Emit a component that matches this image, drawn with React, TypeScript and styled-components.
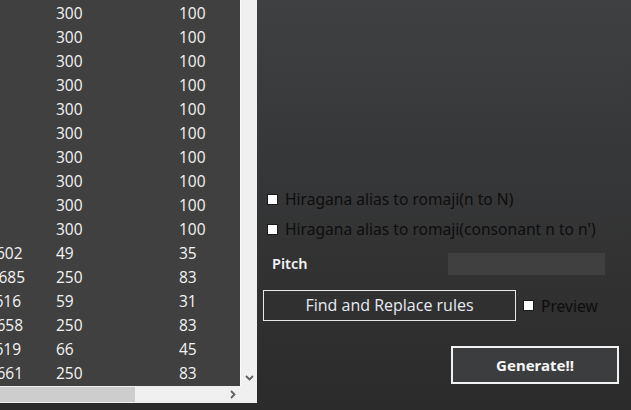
import React from "react";
import styled, { createGlobalStyle } from "styled-components";

const Global = createGlobalStyle`
  html, body { margin: 0; padding: 0; }
  body {
    width: 631px;
    height: 410px;
    overflow: hidden;
    background: #2c2c2c;
  }
`;

const Screen = styled.div`
  width: 631px;
  height: 410px;
  display: flex;
  align-items: flex-start;
  background: linear-gradient(180deg, #3f4042 0%, #37383a 35%, #313131 70%, #2b2b2b 100%);
  font-family: "Open Sans", "Noto Sans", sans-serif;
  overflow: hidden;
`;

const GridPane = styled.div`
  width: 257px;
  height: 403px;
  display: grid;
  grid-template-columns: 240px 17px;
  grid-template-rows: 386px 17px;
  background: #f0f0f0;
`;

const Rows = styled.div`
  background: #404040;
  overflow: hidden;
  padding-top: 1px;
`;

const Row = styled.div`
  height: 24px;
  display: grid;
  grid-template-columns: 56px 123px 61px;
  align-items: center;
  color: #f4f4f4;
  font-size: 15.5px;
  line-height: 24px;
  white-space: nowrap;
`;

const Cell = styled.div<{ $shift?: number }>`
  overflow: hidden;
  text-indent: ${(p) => p.$shift ?? 0}px;
`;

const VScroll = styled.div`
  background: #f0f0f0;
  border-left: 1px solid #fafafa;
  display: flex;
  align-items: flex-end;
  justify-content: center;
  padding-bottom: 5px;
  box-sizing: border-box;
`;

const HScroll = styled.div`
  background: #f0f0f0;
  display: flex;
  align-items: center;
  padding: 1px 0 2px;
  box-sizing: border-box;
`;

const Thumb = styled.div`
  width: 135px;
  height: 15px;
  background: #cdcdcd;
`;

const HArrow = styled.div`
  margin-left: auto;
  margin-right: 4px;
  display: flex;
  align-items: center;
`;

const Corner = styled.div`
  background: #f0f0f0;
`;

const Panel = styled.div`
  flex: 1;
  height: 410px;
  display: flex;
  flex-direction: column;
  padding: 0 0 0 6px;
  box-sizing: border-box;
`;

const CheckRow = styled.label<{ $top: number }>`
  display: flex;
  align-items: center;
  gap: 7px;
  margin-top: ${(p) => p.$top}px;
  margin-left: 4px;
  height: 20px;
  font-family: "Noto Sans", "Open Sans", sans-serif;
  font-size: 15.6px;
  color: #0d0d0d;
  white-space: nowrap;
`;

const Box = styled.span`
  width: 11px;
  height: 11px;
  box-sizing: border-box;
  background: #ffffff;
  border: 1px solid #1a1a1a;
  flex: none;
`;

const PitchRow = styled.div`
  display: flex;
  align-items: center;
  height: 22px;
  margin-top: 14px;
`;

const PitchLabel = styled.span`
  margin-left: 9px;
  width: 176px;
  color: #f2f2f2;
  font-family: "Noto Sans", sans-serif;
  font-weight: 600;
  font-size: 14.5px;
  line-height: 20px;
  padding-bottom: 2px;
`;

const PitchInput = styled.div`
  width: 157px;
  height: 22px;
  background: #404040;
`;

const FindRow = styled.div`
  display: flex;
  align-items: center;
  margin-top: 15px;
`;

const OutlineButton = styled.button`
  width: 253px;
  height: 31px;
  box-sizing: border-box;
  background: transparent;
  border: 1px solid #e8e8e8;
  color: #e6ebf3;
  font-family: "Open Sans", sans-serif;
  font-size: 16px;
  padding: 0 0 1px;
  margin: 0;
`;

const PreviewCheck = styled.label`
  display: flex;
  align-items: center;
  gap: 7px;
  margin-left: 7px;
  font-family: "Noto Sans", sans-serif;
  font-size: 15.6px;
  color: #0d0d0d;
`;

const GenerateWrap = styled.div`
  display: flex;
  justify-content: flex-end;
  margin-top: 25px;
  padding-right: 12px;
`;

const GenerateButton = styled.button`
  width: 168px;
  height: 38px;
  box-sizing: border-box;
  background: #3c3d3f;
  border: 2px solid #f2f2f2;
  color: #f6f6f6;
  font-family: "Noto Sans", sans-serif;
  font-weight: 700;
  font-size: 15px;
  padding: 0;
  margin: 0;
`;

type R = { a: string; shift: number; b: string; c: string };

const rows: R[] = [
  ...Array.from({ length: 10 }, () => ({ a: "", shift: 0, b: "300", c: "100" })),
  { a: "602", shift: -4, b: "49", c: "35" },
  { a: "685", shift: -1.5, b: "250", c: "83" },
  { a: "616", shift: -5.5, b: "59", c: "31" },
  { a: "658", shift: -3.5, b: "250", c: "83" },
  { a: "619", shift: -5.5, b: "66", c: "45" },
  { a: "661", shift: -3.5, b: "250", c: "83" },
];

export default function App() {
  return (
    <>
      <Global />
      <Screen>
        <GridPane>
          <Rows>
            {rows.map((r, i) => (
              <Row key={i}>
                <Cell $shift={r.shift}>{r.a}</Cell>
                <Cell>{r.b}</Cell>
                <Cell>{r.c}</Cell>
              </Row>
            ))}
          </Rows>
          <VScroll>
            <svg width="9" height="6" viewBox="0 0 9 6">
              <path d="M1 1 L4.5 4.5 L8 1" stroke="#606060" strokeWidth="1.8" fill="none" />
            </svg>
          </VScroll>
          <HScroll>
            <Thumb />
            <HArrow>
              <svg width="6" height="9" viewBox="0 0 6 9">
                <path d="M1 1 L4.5 4.5 L1 8" stroke="#606060" strokeWidth="1.8" fill="none" />
              </svg>
            </HArrow>
          </HScroll>
          <Corner />
        </GridPane>
        <Panel>
          <CheckRow $top={189}>
            <Box />
            Hiragana alias to romaji(n to N)
          </CheckRow>
          <CheckRow $top={10}>
            <Box />
            Hiragana alias to romaji(consonant n to n')
          </CheckRow>
          <PitchRow>
            <PitchLabel>Pitch</PitchLabel>
            <PitchInput />
          </PitchRow>
          <FindRow>
            <OutlineButton>Find and Replace rules</OutlineButton>
            <PreviewCheck>
              <Box />
              Preview
            </PreviewCheck>
          </FindRow>
          <GenerateWrap>
            <GenerateButton>Generate!!</GenerateButton>
          </GenerateWrap>
        </Panel>
      </Screen>
    </>
  );
}
